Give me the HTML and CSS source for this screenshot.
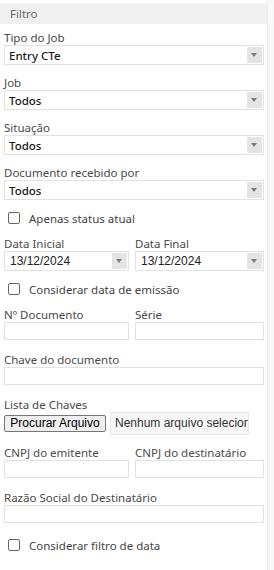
FILE: index.html
```html
<!DOCTYPE html>
<html lang="pt-BR">
<head>
    <meta charset="UTF-8">
    <meta name="viewport" content="width=device-width, initial-scale=1.0">
    <title>Filtro</title>
    <link rel="stylesheet" href="styles.css">
</head>
<body>
    <div class="panel">
        <div class="panel-head">Filtro</div>
        <div class="panel-body">
            <div class="field">
                <label class="lbl">Tipo do Job</label>
                <div class="select"><span class="select-value">Entry CTe</span><span class="select-arrow"></span></div>
            </div>
            <div class="field">
                <label class="lbl">Job</label>
                <div class="select"><span class="select-value">Todos</span><span class="select-arrow"></span></div>
            </div>
            <div class="field">
                <label class="lbl">Situação</label>
                <div class="select"><span class="select-value">Todos</span><span class="select-arrow"></span></div>
            </div>
            <div class="field">
                <label class="lbl">Documento recebido por</label>
                <div class="select"><span class="select-value">Todos</span><span class="select-arrow"></span></div>
            </div>

            <label class="check"><span class="check-box"></span>Apenas status atual</label>

            <div class="row">
                <div>
                    <label class="lbl">Data Inicial</label>
                    <div class="select date"><span class="date-value">13/12/2024</span><span class="select-arrow"></span></div>
                </div>
                <div>
                    <label class="lbl">Data Final</label>
                    <div class="select date"><span class="date-value">13/12/2024</span><span class="select-arrow"></span></div>
                </div>
            </div>

            <label class="check"><span class="check-box"></span>Considerar data de emissão</label>

            <div class="row field-text">
                <div>
                    <label class="lbl">Nº Documento</label>
                    <div class="input"></div>
                </div>
                <div>
                    <label class="lbl">Série</label>
                    <div class="input"></div>
                </div>
            </div>
            <div class="field-text">
                <label class="lbl">Chave do documento</label>
                <div class="input"></div>
            </div>
            <div class="field-file">
                <label class="lbl">Lista de Chaves</label>
                <div class="file">
                    <span class="file-btn">Procurar Arquivo</span>
                    <span class="file-name">Nenhum arquivo selecionado</span>
                </div>
            </div>
            <div class="row field-text">
                <div>
                    <label class="lbl">CNPJ do emitente</label>
                    <div class="input"></div>
                </div>
                <div>
                    <label class="lbl">CNPJ do destinatário</label>
                    <div class="input"></div>
                </div>
            </div>
            <div class="field-text">
                <label class="lbl">Razão Social do Destinatário</label>
                <div class="input"></div>
            </div>

            <label class="check last"><span class="check-box"></span>Considerar filtro de data</label>
        </div>
    </div>
</body>
</html>
```

FILE: styles.css
```css
html, body {
    margin: 0;
    height: 100%;
}
body {
    font-family: "Noto Sans", "Open Sans", sans-serif;
    font-size: 11.5px;
    color: #444;
    background: #f8f8f8;
}
.panel {
    width: 268px;
    min-height: 100%;
    padding-top: 3px;
    box-sizing: border-box;
    background: white;
    border-right: 1px solid #ececec;
}
.panel-head {
    height: 21px;
    line-height: 21px;
    padding-left: 10px;
    background: #f0f0f0;
    color: #6a6a6a;
}
.panel-body {
    padding: 6px 3px 0 4px;
}
.lbl {
    display: block;
    height: 15px;
    line-height: 16px;
    color: #4a4a4a;
    white-space: nowrap;
}
.field {
    margin-bottom: 10px;
}
.field:nth-of-type(4) {
    margin-bottom: 0;
}
.select {
    height: 20px;
    box-sizing: border-box;
    border: 1px solid #e2e2e2;
    background: white;
    display: flex;
    align-items: center;
    justify-content: space-between;
    padding: 1px 1px 1px 4px;
}
.select-value {
    color: #1a1a1a;
    font-weight: 500;
}
.date-value {
    font-family: "Liberation Sans", Arial, sans-serif;
    font-size: 12px;
    color: #222;
    padding-left: 1px;
}
.select-arrow {
    width: 15px;
    height: 16px;
    background: #e4e4e4;
    position: relative;
}
.select-arrow::after {
    content: "";
    position: absolute;
    left: 4px;
    top: 6px;
    border-left: 3.5px solid transparent;
    border-right: 3.5px solid transparent;
    border-top: 4px solid #7a7a7a;
}
.check {
    display: flex;
    align-items: center;
    height: 20px;
    margin: 8px 0;
    padding-left: 4px;
    color: #444;
}
.check.last {
    margin-top: 6px;
}
.check-box {
    width: 10px;
    height: 10px;
    border: 1px solid #666;
    border-radius: 2px;
    margin-right: 9px;
}
.row {
    display: grid;
    grid-template-columns: 125px 1fr;
    column-gap: 6px;
}
.field-text {
    margin-bottom: 12px;
}
.input {
    height: 18px;
    box-sizing: border-box;
    border: 1px solid #e2e2e2;
    background: white;
}
.field-file {
    margin-bottom: 10px;
}
.file {
    display: flex;
    align-items: center;
    height: 23px;
    font-family: "Liberation Sans", Arial, sans-serif;
    font-size: 12px;
}
.file-btn {
    height: 17px;
    line-height: 15px;
    box-sizing: border-box;
    width: 102px;
    text-align: center;
    background: #efefef;
    border: 1px solid #767676;
    border-radius: 2px;
    color: #000;
}
.file-name {
    margin-left: 4px;
    width: 139px;
    height: 23px;
    line-height: 21px;
    box-sizing: border-box;
    padding-left: 4px;
    border: 1px solid #e6e6e6;
    background: #f6f6f6;
    color: #333;
    white-space: nowrap;
    overflow: hidden;
}
```
